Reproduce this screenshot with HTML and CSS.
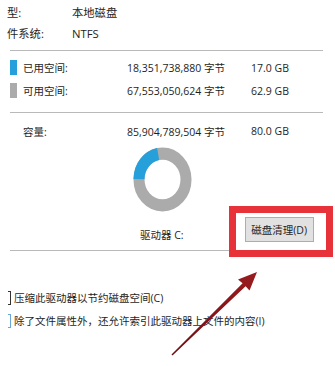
FILE: index.html
```html
<!DOCTYPE html>
<html lang="zh-CN">
<head>
<meta charset="utf-8">
<title>本地磁盘属性</title>
<link rel="stylesheet" href="styles.css">
</head>
<body>
<div class="page">
  <div class="info">
    <div class="irow"><span class="ilbl">型:</span><span class="ival">本地磁盘</span></div>
    <div class="irow"><span class="ilbl">件系统:</span><span class="ival">NTFS</span></div>
  </div>
  <div class="sep sep-a"></div>
  <div class="space">
    <div class="srow"><i class="swatch blue"></i><span class="slbl">已用空间:</span><span class="bytes">18,351,738,880 字节</span><span class="gb">17.0 GB</span></div>
    <div class="srow"><i class="swatch gray"></i><span class="slbl">可用空间:</span><span class="bytes">67,553,050,624 字节</span><span class="gb">62.9 GB</span></div>
  </div>
  <div class="sep sep-b"></div>
  <div class="srow cap"><i class="swatch"></i><span class="slbl">容量:</span><span class="bytes">85,904,789,504 字节</span><span class="gb">80.0 GB</span></div>
  <div class="chart">
    <svg class="donut" viewBox="0 0 64 64" preserveAspectRatio="none">
      <circle cx="32" cy="32" r="25.5" fill="none" stroke="#ababab" stroke-width="12"/>
      <circle cx="32" cy="32" r="25.5" fill="none" stroke="#26a0da" stroke-width="12" stroke-dasharray="34.5 200" transform="rotate(181 32 32)"/>
    </svg>
  </div>
  <div class="drive">
    <span class="drive-lbl">驱动器 C:</span>
    <button class="clean">磁盘清理(D)</button>
  </div>
  <div class="sep sep-c"></div>
  <div class="checks">
    <label class="chk"><i class="box"></i><span>压缩此驱动器以节约磁盘空间(C)</span></label>
    <label class="chk"><i class="box focus"></i><span>除了文件属性外，还允许索引此驱动器上文件的内容(I)</span></label>
  </div>
  <div class="highlight"></div>
  <svg class="arrow" viewBox="0 0 335 366" width="335" height="366">
    <defs>
      <linearGradient id="ag" x1="172" y1="355" x2="257" y2="272" gradientUnits="userSpaceOnUse">
        <stop offset="0" stop-color="#6e0f12"/>
        <stop offset="1" stop-color="#9a1c1f"/>
      </linearGradient>
    </defs>
    <polygon fill="url(#ag)" points="257,272 249.5,290.5 245.6,286.3 172.5,355.6 171.5,354.4 242.6,283.2 238,279.5"/>
  </svg>
</div>
</body>
</html>
```

FILE: styles.css
```css
html, body {
  margin: 0;
  padding: 0;
  background: #ffffff;
}

.page {
  position: relative;
  width: 335px;
  height: 366px;
  overflow: hidden;
  background: #ffffff;
  color: #1e1e1e;
  font-family: "Open Sans", "Noto Sans CJK SC", sans-serif;
  font-size: 10.5px;
}

.info {
  padding-top: 1px;
}

.irow {
  display: flex;
  align-items: center;
  height: 21.5px;
  font-size: 11.3px;
}

.ilbl {
  width: 65px;
  margin-left: 7px;
  flex: none;
}

.ival {
  flex: none;
}

.sep {
  height: 1px;
  background: #b9b9b9;
  margin-left: 10px;
  margin-right: 12px;
}

.sep-a {
  margin-top: 6px;
}

.space {
  margin-top: 5px;
}

.srow {
  display: flex;
  align-items: center;
  height: 23px;
  padding-left: 10px;
}

.swatch {
  display: block;
  width: 7px;
  height: 15px;
  margin-right: 6px;
  flex: none;
}

.swatch.blue {
  background: #26a0da;
}

.swatch.gray {
  background: #ababab;
}

.slbl {
  width: 104px;
  flex: none;
}

.bytes {
  width: 124px;
  flex: none;
}

.gb {
  flex: none;
}

.sep-b {
  margin-top: 10px;
}

.cap {
  margin-top: 7px;
  height: 22px;
}

.chart {
  display: flex;
  padding-left: 133px;
  margin-top: 5px;
}

.donut {
  display: block;
  width: 59px;
  height: 65px;
}

.drive {
  display: flex;
  align-items: flex-start;
  height: 30px;
}

.drive-lbl {
  margin-left: 140px;
  margin-top: 16px;
  line-height: 14px;
}

.clean {
  margin-left: 61px;
  margin-top: 5px;
  width: 69px;
  height: 25px;
  padding: 0;
  border: 1px solid #adadad;
  background: #e1e1e1;
  color: #1e1e1e;
  font-family: "Open Sans", "Noto Sans CJK SC", sans-serif;
  font-size: 10.5px;
}

.sep-c {
  margin-top: 8px;
  margin-right: 10px;
}

.checks {
  margin-top: 35px;
}

.chk {
  display: flex;
  align-items: center;
  height: 23px;
}

.box {
  display: block;
  width: 2px;
  height: 12px;
  margin-left: 8px;
  margin-right: 3px;
  border: 1px solid #333333;
  border-left: none;
  flex: none;
}

.box.focus {
  border-color: #6aa6d8;
}

.highlight {
  position: absolute;
  left: 229px;
  top: 206px;
  width: 90px;
  height: 37px;
  border: 7px solid #e8323a;
}

.arrow {
  position: absolute;
  left: 0;
  top: 0;
  pointer-events: none;
}
```
